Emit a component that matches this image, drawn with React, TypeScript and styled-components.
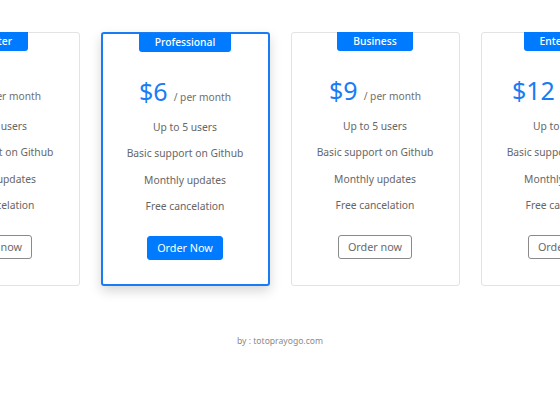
import React from "react";
import styled, { createGlobalStyle } from "styled-components";

const Global = createGlobalStyle`
  html, body { margin: 0; padding: 0; background: #ffffff; }
  body { font-family: "Noto Sans", "Open Sans", Arial, sans-serif; overflow: hidden; width: 560px; height: 420px; }
`;

const Page = styled.div`
  width: 560px;
  height: 420px;
  overflow: hidden;
  display: flex;
  flex-direction: column;
  align-items: center;
  padding-top: 32px;
  box-sizing: border-box;
`;

const Row = styled.div`
  display: flex;
  gap: 21px;
  justify-content: center;
  width: 560px;
`;

const Card = styled.div<{ $featured?: boolean }>`
  flex: 0 0 169px;
  height: 254px;
  box-sizing: border-box;
  border: ${(p) => (p.$featured ? "2px solid #1a7cf5" : "1px solid #e3e3e3")};
  border-radius: 3px;
  background: #fff;
  display: flex;
  flex-direction: column;
  align-items: center;
  box-shadow: ${(p) => (p.$featured ? "0 5px 12px rgba(0,0,0,0.16)" : "none")};
`;

const Badge = styled.div`
  margin-top: -1px;
  height: 19px;
  line-height: 19px;
  padding: 0 16px;
  background: #007bff;
  color: #fff;
  font-size: 10.3px;
  font-weight: 500;
  border-radius: 0 0 3px 3px;
`;

const Price = styled.div`
  margin-top: 24px;
  height: 30px;
  display: flex;
  align-items: baseline;
  gap: 6px;
  white-space: nowrap;
`;

const Amount = styled.span`
  font-size: 25px;
  color: #1a7cf5;
  line-height: 30px;
`;

const Period = styled.span`
  font-size: 10.2px;
  color: #6f6f6f;
`;

const Features = styled.ul`
  list-style: none;
  margin: 8px 0 0;
  padding: 0;
  text-align: center;
`;

const Feature = styled.li`
  font-size: 10.3px;
  line-height: 26.4px;
  color: #666666;
  white-space: nowrap;
`;

const Button = styled.button<{ $primary?: boolean }>`
  margin-top: 16px;
  height: 24px;
  padding: 0 9px;
  font-family: inherit;
  font-size: 10.8px;
  border-radius: 3px;
  border: 1px solid ${(p) => (p.$primary ? "#007bff" : "#8a8a8a")};
  background: ${(p) => (p.$primary ? "#007bff" : "#fff")};
  color: ${(p) => (p.$primary ? "#fff" : "#6a6a6a")};
  white-space: nowrap;
`;

const Footer = styled.div`
  margin-top: 49px;
  font-size: 8.6px;
  color: #8a8a8a;
`;

const plans = [
  { name: "Starter", price: "$3", button: "Order now" },
  { name: "Professional", price: "$6", button: "Order Now", featured: true },
  { name: "Business", price: "$9", button: "Order now" },
  { name: "Enterprise", price: "$12", button: "Order now" },
];

const features = ["Up to 5 users", "Basic support on Github", "Monthly updates", "Free cancelation"];

export default function App() {
  return (
    <>
      <Global />
      <Page>
        <Row>
          {plans.map((p) => (
            <Card key={p.name} $featured={p.featured}>
              <Badge>{p.name}</Badge>
              <Price>
                <Amount>{p.price}</Amount>
                <Period>/ per month</Period>
              </Price>
              <Features>
                {features.map((f) => (
                  <Feature key={f}>{f}</Feature>
                ))}
              </Features>
              <Button $primary={p.featured}>{p.button}</Button>
            </Card>
          ))}
        </Row>
        <Footer>by : totoprayogo.com</Footer>
      </Page>
    </>
  );
}
